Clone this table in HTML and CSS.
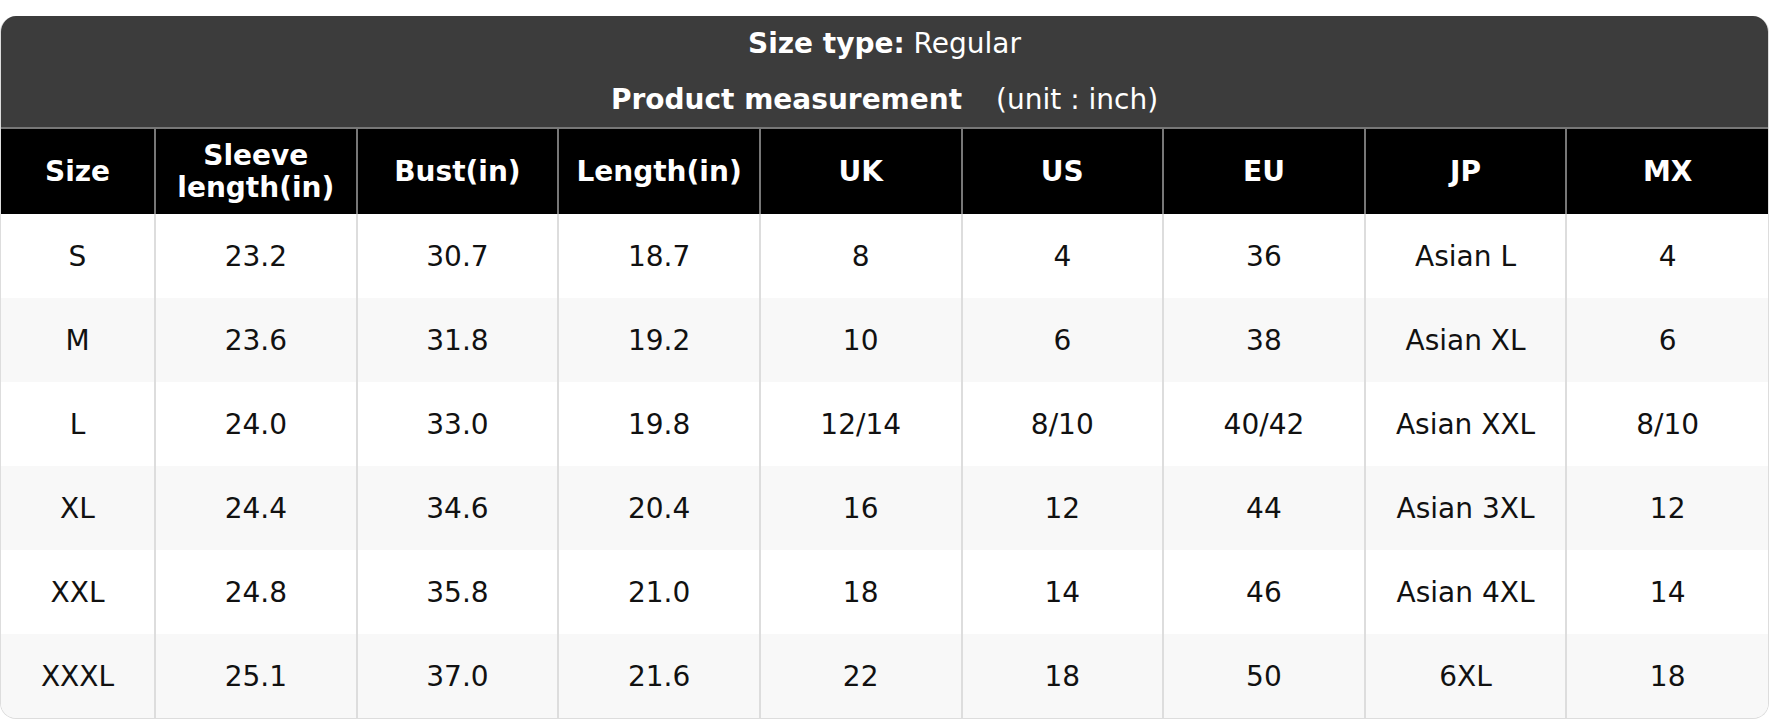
FILE: index.html
```html
<!DOCTYPE html>
<html>
<head>
<meta charset="utf-8">
<link rel="stylesheet" href="styles.css">
</head>
<body>
<div class="chart">
  <div class="caption">
    <div class="line"><b>Size type:</b> Regular</div>
    <div class="line"><b>Product measurement</b><span class="unit">(unit : inch)</span></div>
  </div>
  <table class="sizes">
    <colgroup>
      <col class="c-size"><col><col><col><col><col><col><col><col>
    </colgroup>
    <thead>
      <tr><th>Size</th><th>Sleeve<br>length(in)</th><th>Bust(in)</th><th>Length(in)</th><th>UK</th><th>US</th><th>EU</th><th>JP</th><th>MX</th></tr>
    </thead>
    <tbody>
      <tr><td>S</td><td>23.2</td><td>30.7</td><td>18.7</td><td>8</td><td>4</td><td>36</td><td>Asian L</td><td>4</td></tr>
      <tr><td>M</td><td>23.6</td><td>31.8</td><td>19.2</td><td>10</td><td>6</td><td>38</td><td>Asian XL</td><td>6</td></tr>
      <tr><td>L</td><td>24.0</td><td>33.0</td><td>19.8</td><td>12/14</td><td>8/10</td><td>40/42</td><td>Asian XXL</td><td>8/10</td></tr>
      <tr><td>XL</td><td>24.4</td><td>34.6</td><td>20.4</td><td>16</td><td>12</td><td>44</td><td>Asian 3XL</td><td>12</td></tr>
      <tr><td>XXL</td><td>24.8</td><td>35.8</td><td>21.0</td><td>18</td><td>14</td><td>46</td><td>Asian 4XL</td><td>14</td></tr>
      <tr><td>XXXL</td><td>25.1</td><td>37.0</td><td>21.6</td><td>22</td><td>18</td><td>50</td><td>6XL</td><td>18</td></tr>
    </tbody>
  </table>
</div>
</body>
</html>
```
FILE: styles.css
```css
html, body {
  margin: 0;
  padding: 0;
  background: #ffffff;
}
body {
  font-family: "DejaVu Sans", "Liberation Sans", sans-serif;
  color: #111111;
}
.chart {
  margin-top: 16px;
  width: 1769px;
  box-sizing: border-box;
  border: 1px solid #dddddd;
  border-top: none;
  border-radius: 16px;
  overflow: hidden;
}
.caption {
  background: #3c3c3c;
  color: #ffffff;
  text-align: center;
  font-size: 28px;
  height: 113px;
  border-bottom: 2px solid #777777;
  box-sizing: border-box;
}
.caption .line {
  line-height: 56px;
}
.caption .unit {
  margin-left: 34px;
  font-weight: normal;
}
.sizes {
  width: 100%;
  border-collapse: collapse;
  table-layout: fixed;
}
.sizes .c-size {
  width: 154px;
}
.sizes th {
  background: #000000;
  color: #ffffff;
  font-size: 28px;
  font-weight: bold;
  line-height: 32px;
  height: 85px;
  padding: 0;
  text-align: center;
  border-left: 2px solid #777777;
}
.sizes td {
  font-size: 28px;
  height: 84px;
  padding: 0;
  text-align: center;
  border-left: 2px solid #dddddd;
}
.sizes th:first-child,
.sizes td:first-child {
  border-left: none;
}
.sizes tbody tr:nth-child(even) td {
  background: #f8f8f8;
}
```
